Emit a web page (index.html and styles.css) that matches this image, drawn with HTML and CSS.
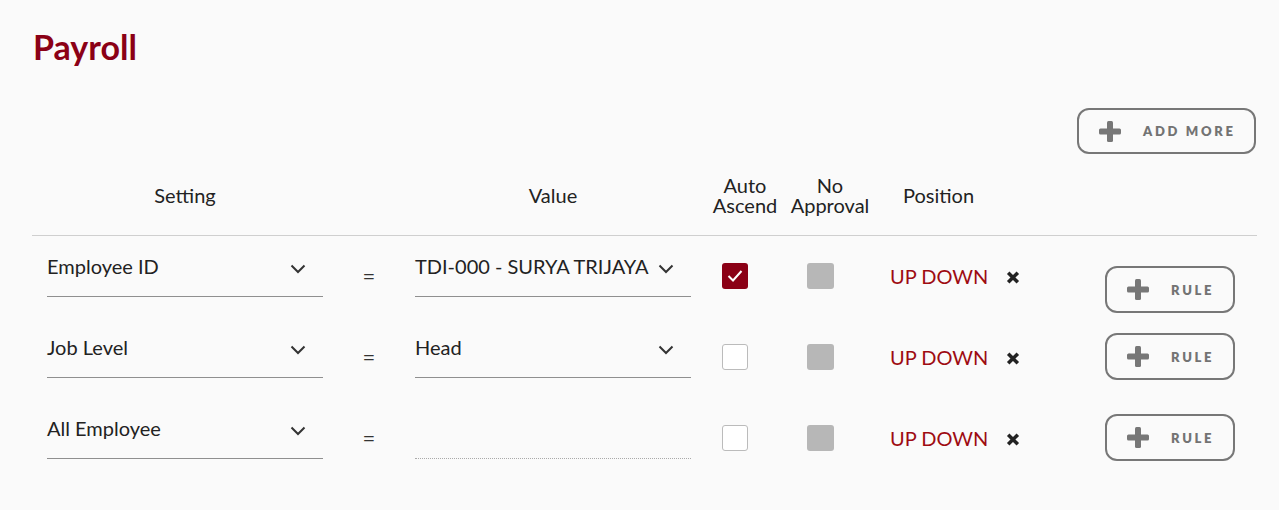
FILE: index.html
```html
<!DOCTYPE html>
<html lang="en">
<head>
<meta charset="utf-8">
<title>Payroll</title>
<link rel="stylesheet" href="styles.css">
</head>
<body>
<div class="page">
  <h1 class="title">Payroll</h1>

  <div class="toolbar">
    <button class="btn btn-add" type="button">
      <svg class="plus" viewBox="0 0 22 21" width="22" height="21"><rect x="8" y="0" width="6" height="21" rx="1.5"/><rect x="0" y="7.5" width="22" height="6" rx="1.5"/></svg>
      <span class="btn-label">ADD MORE</span>
    </button>
  </div>

  <div class="grid head">
    <div class="h h-setting">Setting</div>
    <div class="h h-eq"></div>
    <div class="h h-value">Value</div>
    <div class="h h-auto">Auto<br>Ascend</div>
    <div class="h h-noapp">No<br>Approval</div>
    <div class="h h-pos">Position</div>
    <div class="h h-act"></div>
  </div>

  <div class="rows">
    <div class="grid row">
      <div class="field"><span class="field-text">Employee ID</span><svg class="chev" viewBox="0 0 16 10" width="16" height="10"><path d="M1.5 1.5 L8 8 L14.5 1.5"/></svg></div>
      <div class="eq">=</div>
      <div class="field"><span class="field-text">TDI-000 - SURYA TRIJAYA</span><svg class="chev" viewBox="0 0 16 10" width="16" height="10"><path d="M1.5 1.5 L8 8 L14.5 1.5"/></svg></div>
      <div class="cell-auto"><span class="check checked"><svg viewBox="0 0 26 26" width="26" height="26"><path d="M6.5 13 L11 17.5 L19.5 8"/></svg></span></div>
      <div class="cell-noapp"><span class="box-off"></span></div>
      <div class="cell-pos"><span class="updown">UP DOWN</span><svg class="x" viewBox="0 0 14 13" width="14" height="13"><path d="M2.2 1.8 L11.8 11.2 M11.8 1.8 L2.2 11.2"/></svg></div>
      <div class="cell-act first"><button class="btn btn-rule" type="button"><svg class="plus" viewBox="0 0 22 21" width="22" height="21"><rect x="8" y="0" width="6" height="21" rx="1.5"/><rect x="0" y="7.5" width="22" height="6" rx="1.5"/></svg><span class="btn-label">RULE</span></button></div>
    </div>

    <div class="grid row">
      <div class="field"><span class="field-text">Job Level</span><svg class="chev" viewBox="0 0 16 10" width="16" height="10"><path d="M1.5 1.5 L8 8 L14.5 1.5"/></svg></div>
      <div class="eq">=</div>
      <div class="field"><span class="field-text">Head</span><svg class="chev" viewBox="0 0 16 10" width="16" height="10"><path d="M1.5 1.5 L8 8 L14.5 1.5"/></svg></div>
      <div class="cell-auto"><span class="check"></span></div>
      <div class="cell-noapp"><span class="box-off"></span></div>
      <div class="cell-pos"><span class="updown">UP DOWN</span><svg class="x" viewBox="0 0 14 13" width="14" height="13"><path d="M2.2 1.8 L11.8 11.2 M11.8 1.8 L2.2 11.2"/></svg></div>
      <div class="cell-act"><button class="btn btn-rule" type="button"><svg class="plus" viewBox="0 0 22 21" width="22" height="21"><rect x="8" y="0" width="6" height="21" rx="1.5"/><rect x="0" y="7.5" width="22" height="6" rx="1.5"/></svg><span class="btn-label">RULE</span></button></div>
    </div>

    <div class="grid row">
      <div class="field"><span class="field-text">All Employee</span><svg class="chev" viewBox="0 0 16 10" width="16" height="10"><path d="M1.5 1.5 L8 8 L14.5 1.5"/></svg></div>
      <div class="eq">=</div>
      <div class="field field-empty"><span class="field-text">&nbsp;</span></div>
      <div class="cell-auto"><span class="check"></span></div>
      <div class="cell-noapp"><span class="box-off"></span></div>
      <div class="cell-pos"><span class="updown">UP DOWN</span><svg class="x" viewBox="0 0 14 13" width="14" height="13"><path d="M2.2 1.8 L11.8 11.2 M11.8 1.8 L2.2 11.2"/></svg></div>
      <div class="cell-act"><button class="btn btn-rule" type="button"><svg class="plus" viewBox="0 0 22 21" width="22" height="21"><rect x="8" y="0" width="6" height="21" rx="1.5"/><rect x="0" y="7.5" width="22" height="6" rx="1.5"/></svg><span class="btn-label">RULE</span></button></div>
    </div>
  </div>
</div>
</body>
</html>
```

FILE: styles.css
```css
* { box-sizing: border-box; }

html, body {
  margin: 0;
  background: #fafafa;
}

body {
  font-family: Lato, "Open Sans", "Liberation Sans", sans-serif;
  color: #222;
}

.page {
  padding: 0 22px 0 32px;
}

.title {
  margin: 27px 0 0 1px;
  font-size: 34px;
  line-height: 40px;
  font-weight: 700;
  color: #8b0016;
}

.toolbar {
  display: flex;
  justify-content: flex-end;
  margin-top: 41px;
  padding-right: 1px;
}

.btn {
  display: inline-flex;
  align-items: center;
  background: transparent;
  border: 2px solid #777;
  border-radius: 12px;
  padding: 0 0 0 20px;
  font-family: Lato, "Open Sans", "Liberation Sans", sans-serif;
  font-weight: 800;
  font-size: 13px;
  letter-spacing: 2.7px;
  color: #737373;
  white-space: nowrap;
  cursor: pointer;
}

.btn .plus {
  fill: #777;
  flex: none;
  margin-right: 22px;
}

.btn-add {
  height: 46px;
  width: 179px;
}

.btn-rule {
  height: 47px;
  width: 130px;
}

.grid {
  display: grid;
  grid-template-columns: 276px 92px 276px 99px 100px 1fr 130px;
  padding-left: 15px;
  padding-right: 22px;
}

.head {
  margin-top: 21px;
  padding-bottom: 20px;
  border-bottom: 1px solid #cfcfcf;
  align-items: center;
  font-size: 20px;
  line-height: 20px;
  color: #222;
}

.h { text-align: center; }
.h-auto { padding-left: 9px; }
.h-noapp { padding-right: 20px; }
.h-pos { text-align: left; padding-left: 13px; }

.rows {
  padding-top: 10px;
}

.row {
  height: 81px;
  align-items: start;
}

.field {
  display: flex;
  align-items: center;
  justify-content: space-between;
  margin-top: 8px;
  padding-bottom: 18px;
  border-bottom: 1px solid #8f8f8f;
  font-size: 20px;
  line-height: 24px;
}

.field-empty {
  border-bottom: 1px dotted #aaa;
}

.chev {
  flex: none;
  margin: 6px 17px 0 0;
  fill: none;
  stroke: #333;
  stroke-width: 2;
}

.eq {
  margin-top: 19px;
  text-align: center;
  font-size: 22px;
  line-height: 22px;
  color: #333;
}

.cell-auto { padding: 17px 0 0 31px; }
.cell-noapp { padding: 17px 0 0 17px; }

.check {
  display: block;
  width: 26px;
  height: 26px;
  border: 1px solid #bbb;
  border-radius: 3px;
  background: #fff;
}

.check.checked {
  border: none;
  background: #8b0016;
}

.check svg {
  display: block;
  fill: none;
  stroke: #fff;
  stroke-width: 2;
}

.box-off {
  display: block;
  width: 27px;
  height: 26px;
  border-radius: 3px;
  background: #b7b7b7;
}

.cell-pos {
  display: flex;
  align-items: center;
  margin-top: 18px;
  font-size: 20px;
  line-height: 24px;
}

.updown {
  color: #9e0b12;
}

.x {
  margin: 2px 0 0 18px;
  fill: none;
  stroke: #222;
  stroke-width: 3.6;
}

.cell-act { padding-top: 6px; }
.cell-act.first { padding-top: 20px; }
```
